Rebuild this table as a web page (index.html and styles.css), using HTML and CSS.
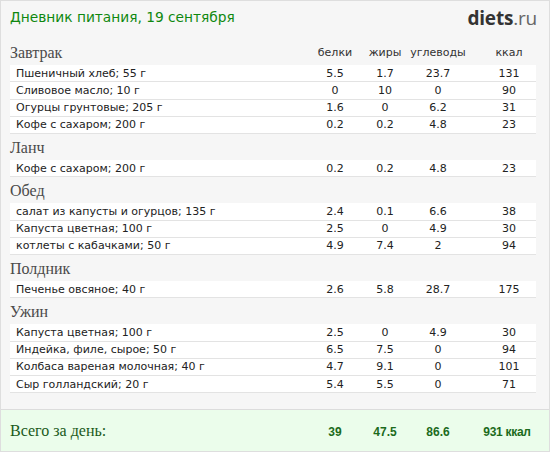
FILE: index.html
```html
<!DOCTYPE html>
<html lang="ru">
<head>
<meta charset="utf-8">
<title>Дневник питания</title>
<link rel="stylesheet" href="styles.css">
</head>
<body>
<div class="page">
  <div class="top">
    <div class="title">Дневник питания, 19 сентября</div>
    <div class="logo"><b>diets</b>.ru</div>
  </div>

  <div class="diary">
    <div class="sec">
      <div class="sec-name">Завтрак</div>
      <div class="cols"><span>белки</span><span>жиры</span><span>углеводы</span><span class="kc">ккал</span></div>
    </div>
    <div class="row"><span class="name">Пшеничный хлеб; 55 г</span><span>5.5</span><span>1.7</span><span>23.7</span><span class="kc">131</span></div>
    <div class="row"><span class="name">Сливовое масло; 10 г</span><span>0</span><span>10</span><span>0</span><span class="kc">90</span></div>
    <div class="row"><span class="name">Огурцы грунтовые; 205 г</span><span>1.6</span><span>0</span><span>6.2</span><span class="kc">31</span></div>
    <div class="row"><span class="name">Кофе с сахаром; 200 г</span><span>0.2</span><span>0.2</span><span>4.8</span><span class="kc">23</span></div>

    <div class="sec"><div class="sec-name">Ланч</div></div>
    <div class="row"><span class="name">Кофе с сахаром; 200 г</span><span>0.2</span><span>0.2</span><span>4.8</span><span class="kc">23</span></div>

    <div class="sec"><div class="sec-name">Обед</div></div>
    <div class="row"><span class="name">салат из капусты и огурцов; 135 г</span><span>2.4</span><span>0.1</span><span>6.6</span><span class="kc">38</span></div>
    <div class="row"><span class="name">Капуста цветная; 100 г</span><span>2.5</span><span>0</span><span>4.9</span><span class="kc">30</span></div>
    <div class="row"><span class="name">котлеты с кабачками; 50 г</span><span>4.9</span><span>7.4</span><span>2</span><span class="kc">94</span></div>

    <div class="sec"><div class="sec-name">Полдник</div></div>
    <div class="row"><span class="name">Печенье овсяное; 40 г</span><span>2.6</span><span>5.8</span><span>28.7</span><span class="kc">175</span></div>

    <div class="sec"><div class="sec-name">Ужин</div></div>
    <div class="row"><span class="name">Капуста цветная; 100 г</span><span>2.5</span><span>0</span><span>4.9</span><span class="kc">30</span></div>
    <div class="row"><span class="name">Индейка, филе, сырое; 50 г</span><span>6.5</span><span>7.5</span><span>0</span><span class="kc">94</span></div>
    <div class="row"><span class="name">Колбаса вареная молочная; 40 г</span><span>4.7</span><span>9.1</span><span>0</span><span class="kc">101</span></div>
    <div class="row"><span class="name">Сыр голландский; 20 г</span><span>5.4</span><span>5.5</span><span>0</span><span class="kc">71</span></div>
  </div>

  <div class="total">
    <div class="total-grid">
      <span class="total-label">Всего за день:</span><span>39</span><span>47.5</span><span>86.6</span><span class="kc">931 ккал</span>
    </div>
  </div>
</div>
</body>
</html>
```

FILE: styles.css
```css
html, body {
  margin: 0;
  padding: 0;
  background: #ffffff;
}

.page {
  width: 550px;
  height: 452px;
  box-sizing: border-box;
  border: 1px solid #dedede;
  background: #f6f6f6;
  overflow: hidden;
  display: flex;
  flex-direction: column;
}

.top {
  height: 38px;
  display: flex;
  justify-content: space-between;
  align-items: flex-start;
  padding: 0 12px 0 9px;
}

.title {
  font-family: "DejaVu Sans", Verdana, sans-serif;
  font-size: 13.75px;
  color: #0f880f;
  line-height: 16px;
  padding-top: 8px;
}

.logo {
  font-family: "Open Sans", "Liberation Sans", sans-serif;
  font-size: 19px;
  color: #666;
  line-height: 20px;
  padding-top: 7px;
  letter-spacing: -0.2px;
}

.logo b {
  color: #333;
  font-weight: 700;
}

.diary {
  padding: 0 13px 0 9px;
}

.sec {
  height: 26px;
  display: grid;
  grid-template-columns: 1fr 50px 50px 56px 70px;
  align-items: end;
}

.sec-name {
  font-family: "Liberation Serif", "Times New Roman", serif;
  font-size: 16px;
  color: #4a4a4a;
  line-height: 16px;
  padding-bottom: 4px;
}

.cols {
  display: contents;
}

.cols span {
  font-family: "DejaVu Sans", Verdana, sans-serif;
  font-size: 11px;
  color: #333;
  text-align: center;
  line-height: 12px;
  padding-bottom: 6px;
}

.row {
  height: 16.25px;
  border-bottom: 1px solid #e3e3e3;
  background: #fff;
  display: grid;
  grid-template-columns: 1fr 50px 50px 56px 70px;
  align-items: center;
  font-family: "DejaVu Sans", Verdana, sans-serif;
  font-size: 11px;
  color: #222;
  line-height: 13px;
}

.row span {
  text-align: center;
}

.row .name {
  text-align: left;
  padding-left: 6px;
}

.kc {
  padding-left: 16px;
}

.total {
  margin-top: auto;
  height: 41px;
  border-top: 1px solid #dcdcdc;
  background: #ebfdeb;
  padding: 0 13px 0 9px;
  display: flex;
  align-items: center;
}

.total-grid {
  flex: 1;
  display: grid;
  grid-template-columns: 1fr 50px 50px 56px 70px;
  align-items: baseline;
}

.total-grid span {
  font-family: "Liberation Sans", Arial, sans-serif;
  font-size: 12px;
  font-weight: 700;
  color: #1c6b1c;
  text-align: center;
}

.total-grid .total-label {
  font-family: "Liberation Serif", "Times New Roman", serif;
  font-size: 16px;
  font-weight: 400;
  color: #1a5a1a;
  text-align: left;
}

.total-grid .kc {
  padding-left: 12px;
  letter-spacing: -0.3px;
}
```
